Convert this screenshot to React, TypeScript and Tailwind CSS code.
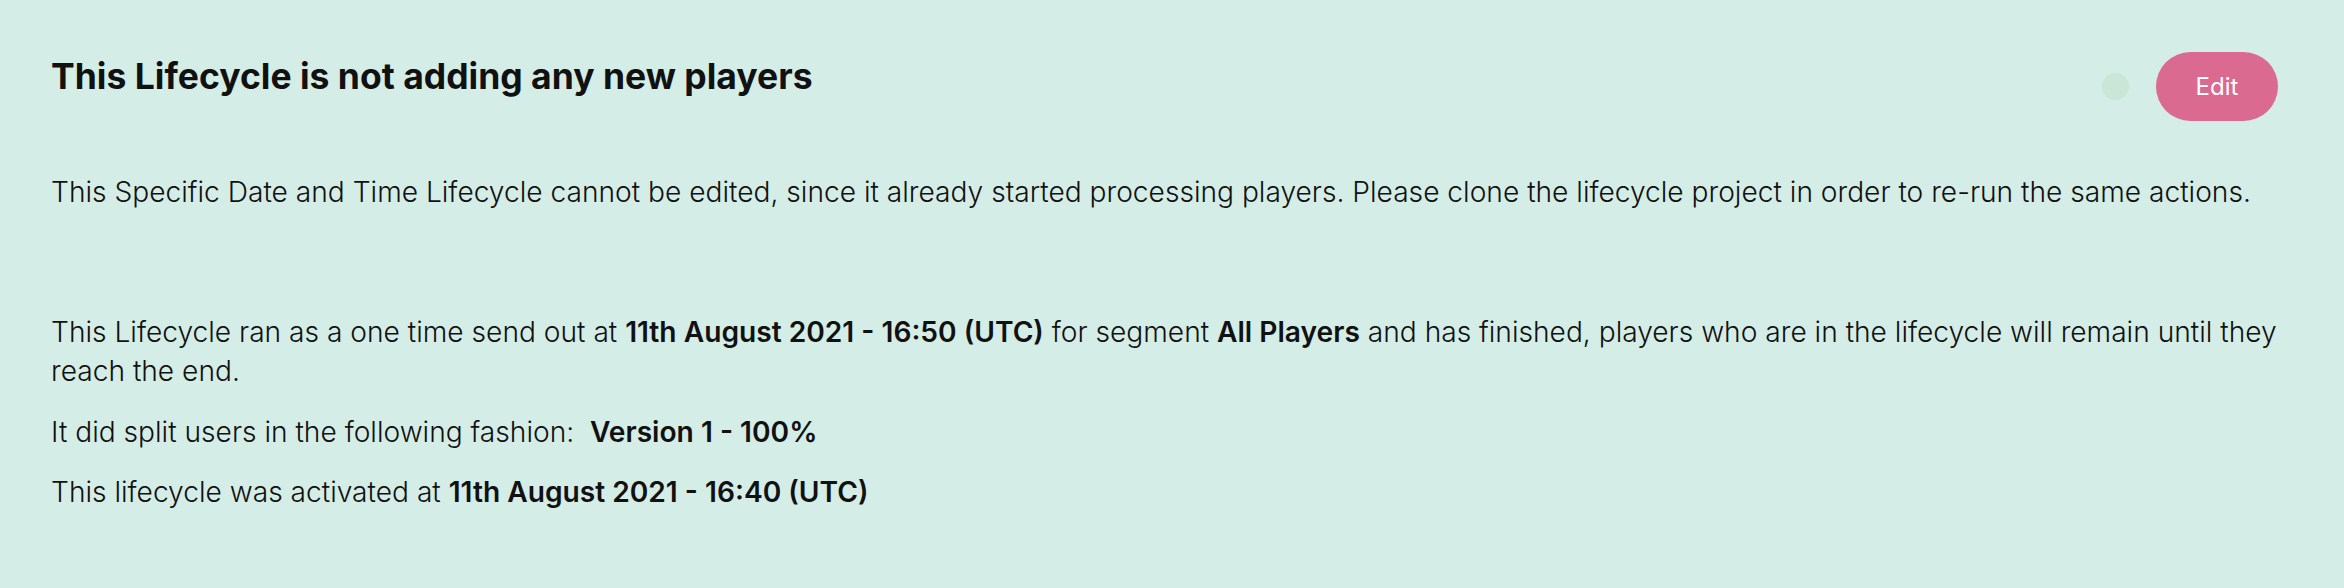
export default function App() {
  return (
    <div
      className="min-h-[588px] w-full bg-[#d5ede7] pl-[51px] pr-[66px] pt-[52px] text-[#111]"
      style={{ fontFamily: "Inter, 'Noto Sans', sans-serif" }}
    >
      {/* Header */}
      <div className="flex items-start justify-between">
        <h2 className="mt-[3px] text-[35.5px] font-bold leading-[43px]">
          This Lifecycle is not adding any new players
        </h2>
        <div className="flex items-center gap-[27px]">
          <span className="h-[27px] w-[27px] rounded-full bg-[#c9e6d6]" />
          <button className="h-[69px] w-[122px] rounded-full bg-[#db6a90] text-[24px] text-white">
            Edit
          </button>
        </div>
      </div>

      {/* Body */}
      <div className="text-[28.15px] font-light leading-[39.2px]">
        <p className="mt-[52px]">
          This Specific Date and Time Lifecycle cannot be edited, since it already started processing players. Please
          clone the lifecycle project in order to re-run the same actions.
        </p>
        <p className="mt-[101px]">
          This Lifecycle ran as a one time send out at <b className="font-semibold">11th August 2021 - 16:50 (UTC)</b>{" "}
          for segment <b className="font-semibold">All Players</b> and has finished, players who are in the lifecycle
          will remain until they reach the end.
        </p>
        <p className="mt-[21px]">
          It did split users in the following fashion:&nbsp; <b className="font-semibold">Version 1 - 100%</b>
        </p>
        <p className="mt-[21px]">
          This lifecycle was activated at <b className="font-semibold">11th August 2021 - 16:40 (UTC)</b>
        </p>
      </div>
    </div>
  )
}
